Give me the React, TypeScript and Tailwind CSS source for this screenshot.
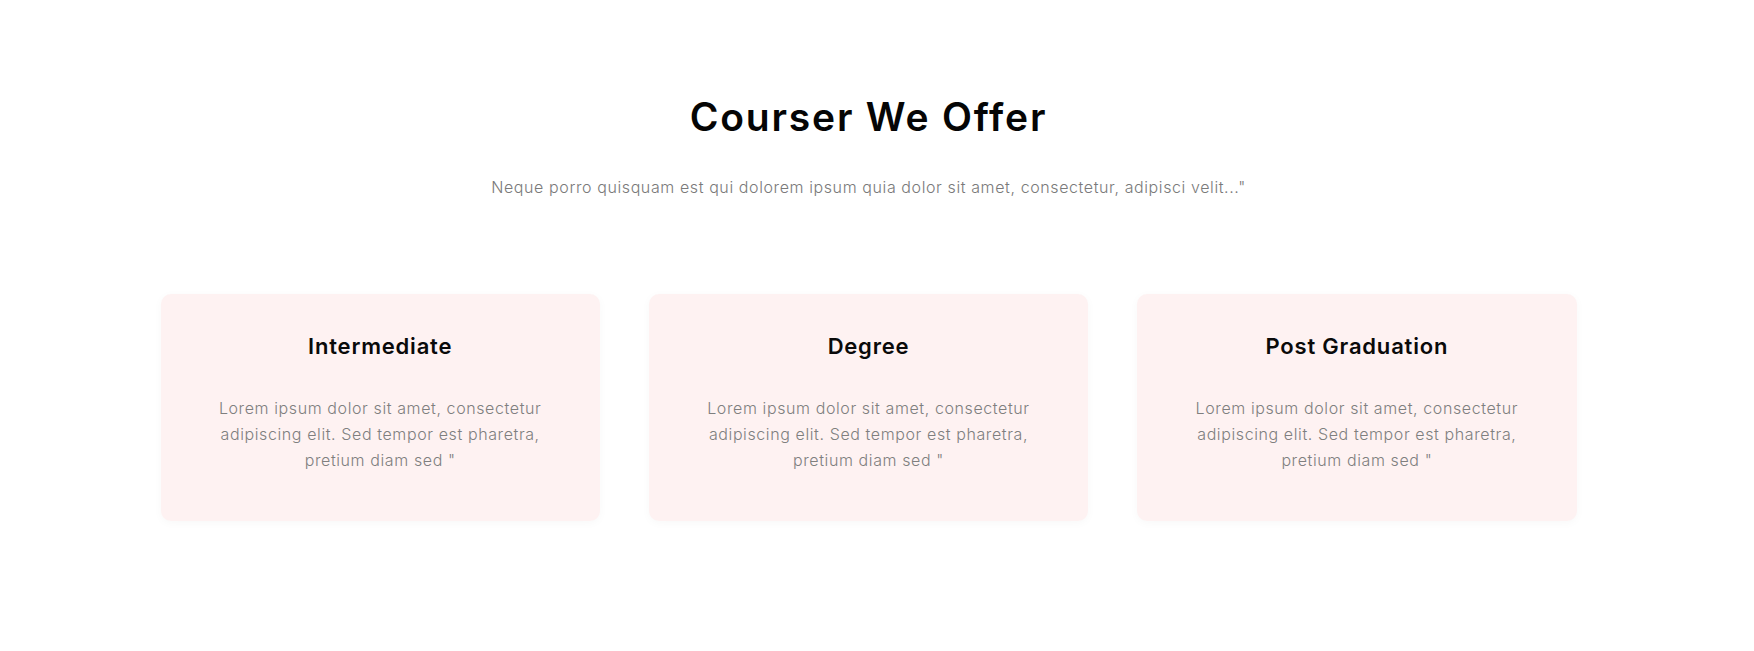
import React from "react";

const cards = [
  { title: "Intermediate" },
  { title: "Degree" },
  { title: "Post Graduation" },
];

export default function App() {
  return (
    <div className="min-h-[651px] bg-white pr-[17px] font-['Inter','Open_Sans',sans-serif]">
      <div className="mx-auto w-[1416px] pt-[94px]">
        <h2 className="text-center text-[39px] leading-[46px] font-semibold tracking-[1.8px] text-[#050505]">
          Courser We Offer
        </h2>
        <p className="mt-[35px] text-center text-[16px] leading-[24px] font-light tracking-[0.6px] text-[#7a7a7a]">
          Neque porro quisquam est qui dolorem ipsum quia dolor sit amet, consectetur, adipisci velit..."
        </p>
        <div className="mt-[95px] grid grid-cols-3 gap-[49px]">
          {cards.map((c) => (
            <div
              key={c.title}
              className="h-[227px] rounded-[10px] bg-[#fef2f2] pt-[37px] text-center shadow-[0_2px_10px_rgba(0,0,0,0.03)]"
            >
              <h3 className="text-[22px] leading-[30px] font-semibold tracking-[0.8px] text-[#0a0a0a]">{c.title}</h3>
              <p className="mt-[34px] text-[16px] leading-[26px] font-light tracking-[0.6px] text-[#7f7f7f]">
                Lorem ipsum dolor sit amet, consectetur
                <br />
                adipiscing elit. Sed tempor est pharetra,
                <br />
                pretium diam sed "
              </p>
            </div>
          ))}
        </div>
      </div>
    </div>
  );
}
